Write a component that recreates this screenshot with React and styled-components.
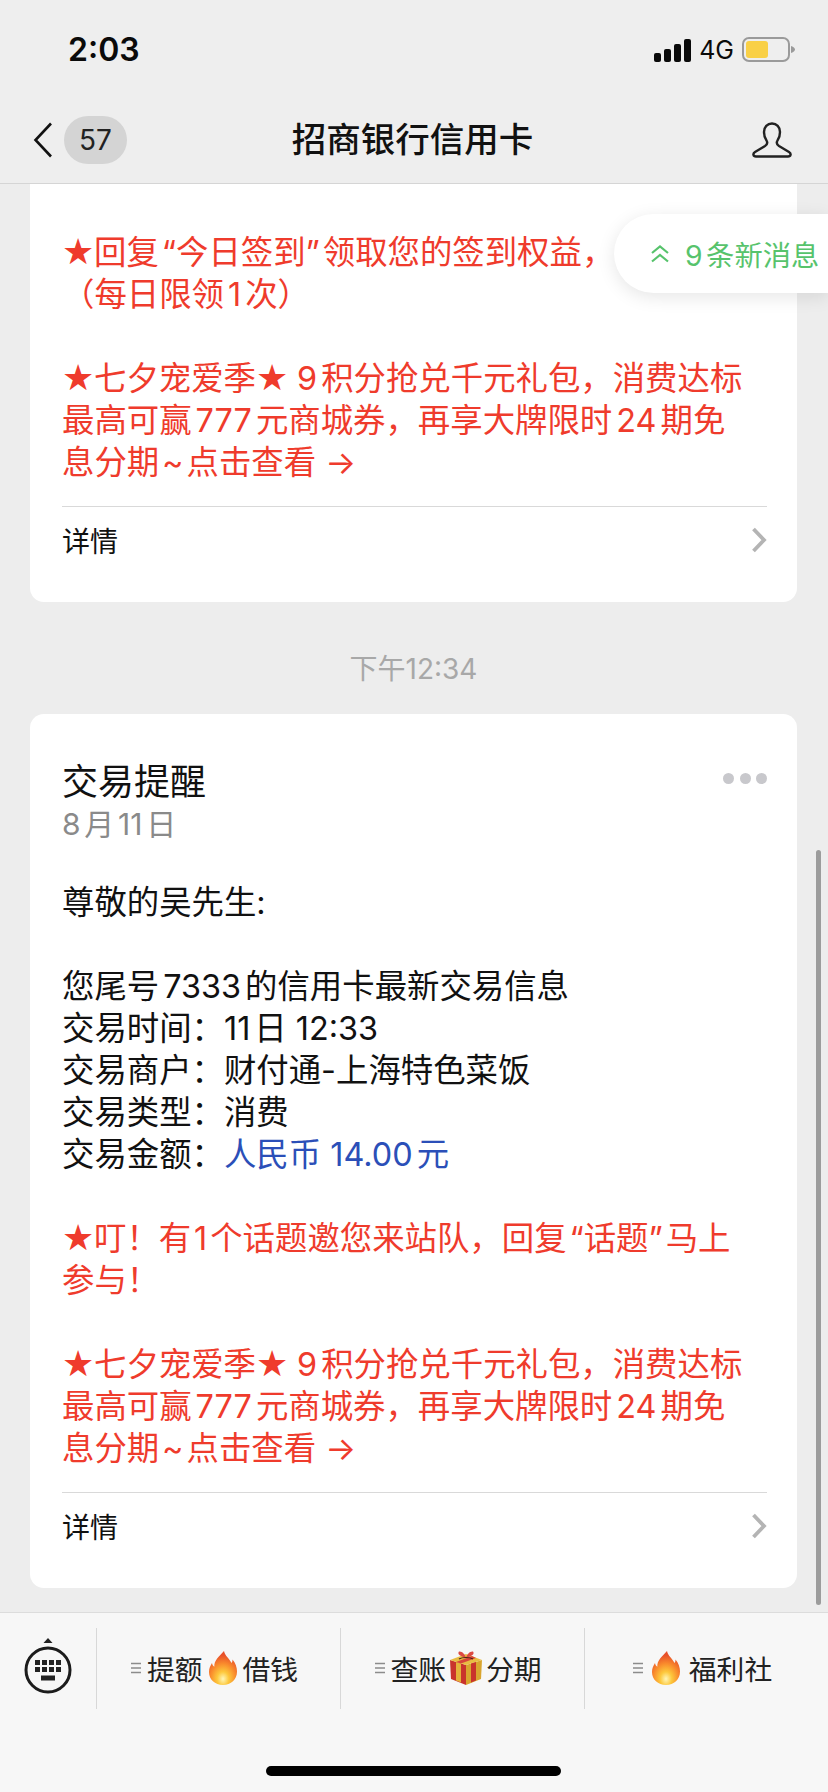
import styled, { createGlobalStyle } from 'styled-components';

const GlobalStyle = createGlobalStyle`
  html, body {
    margin: 0;
    padding: 0;
    background: #ededed;
  }
  * {
    box-sizing: border-box;
  }
`;

const tones = {
  plain: '#111111',
  red: '#ef3b2c',
  blue: '#2b4fb8',
};

const promo = [
  ['red', '★七夕宠爱季★ 9积分抢兑千元礼包，消费达标'],
  ['red', '最高可赢777元商城券，再享大牌限时24期免'],
  ['red', '息分期\u200a~\u200a点击查看 →'],
];

const Page = styled.div`
  position: relative;
  width: 828px;
  height: 1792px;
  overflow: hidden;
  display: flex;
  flex-direction: column;
  background: #ededed;
  font-family: Inter, "Noto Sans CJK SC", sans-serif;
  text-autospace: normal;
`;

const Header = styled.header`
  height: 184px;
  flex: none;
  background: #eeeeee;
  border-bottom: 1px solid #d5d5d5;
`;

const StatusBar = styled.div`
  height: 100px;
  padding: 0 33px 0 68px;
  display: flex;
  align-items: center;
  justify-content: space-between;
`;

const Clock = styled.span`
  font-size: 32px;
  font-weight: 600;
  color: #0a0a0a;
  transform: translateY(-1px);
`;

const StatusIcons = styled.div`
  display: flex;
  align-items: center;
  gap: 8px;
`;

const Network = styled.span`
  font-size: 25px;
  color: #0a0a0a;
  line-height: 25px;
`;

const NavBar = styled.div`
  position: relative;
  height: 83px;
  display: flex;
  align-items: flex-start;
  justify-content: space-between;
  padding: 16px 36px 0 33px;
`;

const BackGroup = styled.div`
  display: flex;
  align-items: center;
  gap: 11px;
`;

const Badge = styled.span`
  width: 63px;
  height: 48px;
  border-radius: 24px;
  background: #d4d4d4;
  color: #222222;
  font-size: 28px;
  display: flex;
  align-items: center;
  justify-content: center;
`;

const Title = styled.h1`
  position: absolute;
  left: 0;
  right: 3px;
  top: 16px;
  margin: 0;
  text-align: center;
  font-size: 34.5px;
  line-height: 48px;
  font-weight: 500;
  color: #111111;
`;

const PersonIcon = styled.svg`
  margin-top: 6px;
`;

const Feed = styled.main`
  flex: 1;
  min-height: 0;
  padding: 0 31px 0 30px;
  overflow: hidden;
`;

const Card = styled.section`
  background: #ffffff;
  padding: ${(p) => (p.$clipped ? '48px' : '46px')} 30px 0 32px;
  border-radius: ${(p) => (p.$clipped ? '0 0 14px 14px' : '14px')};
`;

const CardHead = styled.div`
  display: flex;
  justify-content: space-between;
  align-items: flex-start;
`;

const CardTitle = styled.div`
  font-size: 36px;
  line-height: 44px;
  color: #111111;
`;

const CardDate = styled.div`
  font-size: 30px;
  line-height: 40px;
  color: #8a8a8a;
`;

const MoreDots = styled.div`
  display: flex;
  gap: 5.5px;
  margin-top: 13px;
`;

const Dot = styled.i`
  width: 11px;
  height: 11px;
  border-radius: 50%;
  background: #c8c8cc;
`;

const Body = styled.div`
  margin-top: ${(p) => p.$top || 0}px;
`;

const Line = styled.div`
  font-size: 32.4px;
  line-height: 42px;
  height: 42px;
  white-space: nowrap;
  color: ${(p) => tones[p.$tone] || tones.plain};
`;

const Star = styled.span`
  display: inline-block;
  width: 32px;
  font-family: "DejaVu Sans", sans-serif;
  font-size: 36px;
  line-height: 0;
`;

const Blue = styled.span`
  color: ${tones.blue};
`;

const DetailRow = styled.div`
  margin-top: 22px;
  height: 96px;
  padding: 1px 0 31px;
  border-top: 1px solid #d9d9d9;
  display: flex;
  align-items: center;
  justify-content: space-between;
  font-size: 28px;
  color: #111111;
`;

const TimeLabel = styled.div`
  padding: 50px 0 28px;
  text-align: center;
  font-size: 28px;
  line-height: 34px;
  color: #a8a8a8;
  text-autospace: no-autospace;
`;

const NewBubble = styled.div`
  position: absolute;
  top: 214px;
  right: 0;
  width: 214px;
  height: 79px;
  padding-left: 36px;
  border-radius: 40px 0 0 40px;
  background: #ffffff;
  box-shadow: 0 4px 18px rgba(0, 0, 0, 0.1);
  display: flex;
  align-items: center;
  gap: 15px;
  font-size: 28.3px;
  color: #57c36c;
  white-space: nowrap;
`;

const ScrollThumb = styled.div`
  position: absolute;
  top: 850px;
  right: 7px;
  width: 5px;
  height: 755px;
  border-radius: 3px;
  background: #9c9c9c;
`;

const Footer = styled.footer`
  height: 180px;
  flex: none;
  position: relative;
  background: #f7f7f7;
  border-top: 1px solid #dcdcdc;
  padding-top: 15px;
`;

const MenuRow = styled.nav`
  display: flex;
  height: 81px;
`;

const KeyboardSlot = styled.div`
  width: 96px;
  padding-left: 24px;
  padding-top: 10px;
`;

const MenuItem = styled.div`
  width: 244px;
  border-left: 1px solid #d8d8d8;
  display: flex;
  align-items: center;
  justify-content: center;
  gap: ${(p) => p.$gap}px;
  font-size: 27.8px;
  color: #222222;
  padding: 0 8px 1px 0;
`;

const MenuMark = styled.svg`
  margin-right: ${(p) => p.$space || 0}px;
`;

const HomeBar = styled.div`
  position: absolute;
  left: 266px;
  bottom: 16px;
  width: 295px;
  height: 10px;
  border-radius: 5px;
  background: #000000;
`;

const Signal = () => (
  <svg width="37" height="23" viewBox="0 0 37 23">
    <rect x="0" y="14" width="7" height="9" rx="2" fill="#0a0a0a" />
    <rect x="10" y="10" width="7" height="13" rx="2" fill="#0a0a0a" />
    <rect x="20" y="5" width="7" height="18" rx="2" fill="#0a0a0a" />
    <rect x="30" y="0" width="7" height="23" rx="2" fill="#0a0a0a" />
  </svg>
);

const Battery = () => (
  <svg width="53" height="26" viewBox="0 0 53 26">
    <rect x="1" y="1" width="46" height="23" rx="6" fill="none" stroke="#9a9a9a" strokeWidth="2" />
    <rect x="4" y="4" width="22" height="17" rx="3" fill="#f9d046" />
    <path d="M49 9 c3 1 4 2.5 4 3.5 s-1 2.5 -4 3.5z" fill="#9a9a9a" />
  </svg>
);

const Chevron = () => (
  <svg width="20" height="36" viewBox="0 0 20 36">
    <path d="M18 1.5 L2.5 18 L18 34.5" fill="none" stroke="#111" strokeWidth="2.6" />
  </svg>
);

const Person = () => (
  <PersonIcon width="40" height="36" viewBox="0 0 40 36">
    <path
      d="M20 1.5c-4.6 0-8 3.4-8 8.5 0 3.5 1 6.5 2.5 8.5 1.2 2 .8 4-1.5 5.500L3 30c-2.5 1.5-2 4.5 1 4.5h32c3 0 3.5-3 1-4.5L27 24c-2.3-1.5-2.7-3.5-1.5-5.5 1.5-2 2.5-5 2.5-8.5 0-5.1-3.4-8.5-8-8.5z"
      fill="none"
      stroke="#222"
      strokeWidth="2.4"
      strokeLinejoin="round"
    />
  </PersonIcon>
);

const RowArrow = () => (
  <svg width="16" height="26" viewBox="0 0 16 26">
    <path d="M2.5 2 L13 13 L2.5 24" fill="none" stroke="#b4b4b4" strokeWidth="3.8" />
  </svg>
);

const DoubleUp = () => (
  <svg width="20" height="18" viewBox="0 0 20 18">
    <path d="M2 8 L10 1.5 L18 8 M2 16.5 L10 10 L18 16.5" fill="none" stroke="#57c36c" strokeWidth="2.2" />
  </svg>
);

const KeyboardIcon = () => (
  <svg width="48" height="56" viewBox="0 0 48 56">
    <path d="M19.5 5 L24 0 L28.5 5z" fill="#222" />
    <circle cx="24" cy="32" r="22" fill="none" stroke="#1c1c1c" strokeWidth="3" />
    {[0, 1, 2, 3].map((i) => (
      <rect key={`a${i}`} x={11 + i * 7} y="22" width="5" height="5" fill="#222" />
    ))}
    {[0, 1, 2, 3].map((i) => (
      <rect key={`b${i}`} x={11 + i * 7} y="29" width="5" height="5" fill="#222" />
    ))}
    <rect x="17" y="37.5" width="14" height="5" fill="#222" />
  </svg>
);

const Mark = ({ space }) => (
  <MenuMark $space={space} width="10" height="12" viewBox="0 0 10 12">
    <path d="M0 1.5h10M0 6h10M0 10.5h10" stroke="#8c8c8c" strokeWidth="1.4" />
  </MenuMark>
);

const Fire = ({ id }) => (
  <svg width="28" height="34" viewBox="0 0 28 34">
    <defs>
      <radialGradient id={id} cx="50%" cy="82%" r="70%">
        <stop offset="0" stopColor="#fff6b8" />
        <stop offset="0.3" stopColor="#fdc83c" />
        <stop offset="0.65" stopColor="#f98a2c" />
        <stop offset="1" stopColor="#e8502a" />
      </radialGradient>
    </defs>
    <path
      d="M15 0c1 5 5 7 7.5 12 .8-1 1-2 1-3.5 3 3.5 4.5 8 4.5 12 0 8-6 13.5-14 13.5S0 28.5 0 21c0-4 1.5-6.5 3-9 .3 1.8 1 3 2.3 3.8C5 9 10 6 15 0z"
      fill={`url(#${id})`}
    />
  </svg>
);

const Gift = () => (
  <svg width="34" height="34" viewBox="0 0 34 34">
    <path d="M1 9 L17 14 V34 L2 28z" fill="#c9342c" />
    <path d="M33 9 L17 14 V34 L32 28z" fill="#d9a52e" />
    <path d="M1 9 L17 3 L33 9 L17 14z" fill="#e8bd42" />
    <path d="M7 11 L12 12.6 V31.5 L7 29.5z" fill="#e4b23a" />
    <path d="M22 12.6 L27 11 V29.5 L22 31.5z" fill="#c9342c" />
    <path d="M7 11 L23 5 L27 7 L12 12.6z" fill="#d8453a" />
    <path d="M17 7 C11 5 8 3 10 0.5 C13 0 16 3 17 7 C18 3 21 0 24 0.5 C26 3 23 5 17 7z" fill="#dc4a42" />
    <path d="M10 8 C13 6 21 6 24 8" fill="none" stroke="#4a1f16" strokeWidth="1.2" />
  </svg>
);

// the star is drawn larger than the text around it
const withStars = (text) =>
  text.split('★').flatMap((part, i) => (i === 0 ? [part] : [<Star key={i}>★</Star>, part]));

const renderLines = (lines) =>
  lines.map(([tone, text], i) => (
    <Line key={i} $tone={tone}>
      {text ? withStars(text) : '\u00a0'}
    </Line>
  ));

const Detail = () => (
  <DetailRow>
    <span>详情</span>
    <RowArrow />
  </DetailRow>
);

export default function App() {
  return (
    <Page>
      <GlobalStyle />
      <Header>
        <StatusBar>
          <Clock>2:03</Clock>
          <StatusIcons>
            <Signal />
            <Network>4G</Network>
            <Battery />
          </StatusIcons>
        </StatusBar>
        <NavBar>
          <BackGroup>
            <Chevron />
            <Badge>57</Badge>
          </BackGroup>
          <Title>招商银行信用卡</Title>
          <Person />
        </NavBar>
      </Header>

      <Feed>
        <Card $clipped>
          <Body>
            {renderLines([
              ['red', '★回复\u200a“今日签到”\u200a领取您的签到权益，'],
              ['red', '（每日限领1次）'],
              ['red', ''],
              ...promo,
            ])}
          </Body>
          <Detail />
        </Card>

        <TimeLabel>下午12:34</TimeLabel>

        <Card>
          <CardHead>
            <div>
              <CardTitle>交易提醒</CardTitle>
              <CardDate>8月11日</CardDate>
            </div>
            <MoreDots>
              <Dot />
              <Dot />
              <Dot />
            </MoreDots>
          </CardHead>
          <Body $top={38}>
            {renderLines([
              ['plain', '尊敬的吴先生:'],
              ['plain', ''],
              ['plain', '您尾号7333的信用卡最新交易信息'],
              ['plain', '交易时间：11日 12:33'],
              ['plain', '交易商户：财付通-上海特色菜饭'],
              ['plain', '交易类型：消费'],
            ])}
            <Line>
              交易金额：<Blue>人民币 14.00元</Blue>
            </Line>
            {renderLines([
              ['plain', ''],
              ['red', '★叮！有\u200a1\u200a个话题邀您来站队，回复\u200a“话题”\u200a马上'],
              ['red', '参与！'],
              ['red', ''],
              ...promo,
            ])}
          </Body>
          <Detail />
        </Card>
      </Feed>

      <Footer>
        <MenuRow>
          <KeyboardSlot>
            <KeyboardIcon />
          </KeyboardSlot>
          <MenuItem $gap={6}>
            <Mark />
            提额
            <Fire id="fire-a" />
            借钱
          </MenuItem>
          <MenuItem $gap={3}>
            <Mark space={2} />
            查账
            <Gift />
            分期
          </MenuItem>
          <MenuItem $gap={9}>
            <Mark />
            <Fire id="fire-b" />
            福利社
          </MenuItem>
        </MenuRow>
        <HomeBar />
      </Footer>

      <NewBubble>
        <DoubleUp />
        <span>9条新消息</span>
      </NewBubble>
      <ScrollThumb />
    </Page>
  );
}
